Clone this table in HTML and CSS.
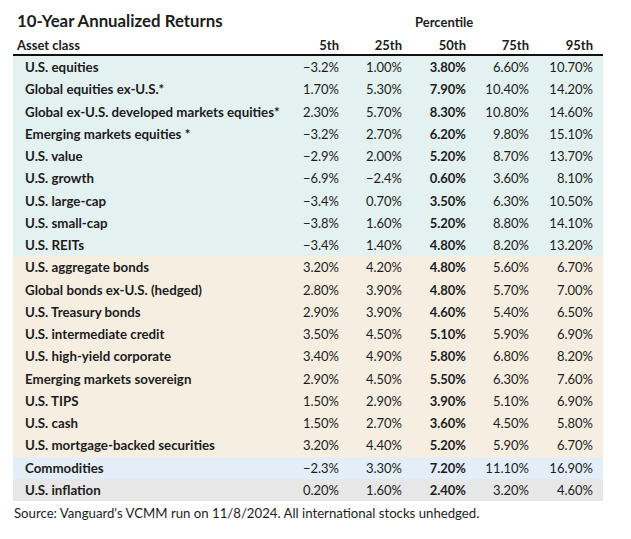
FILE: index.html
```html
<!DOCTYPE html>
<html>
<head>
<meta charset="utf-8">
<link rel="stylesheet" href="styles.css">
</head>
<body>
<div class="wrap">
  <div class="top">
    <h1 class="title">10-Year Annualized Returns</h1>
    <div class="pct">Percentile</div>
  </div>
  <div class="row head">
    <div class="lab">Asset class</div><div>5th</div><div>25th</div><div class="b">50th</div><div>75th</div><div>95th</div>
  </div>
  <div class="body">
    <div class="row eq"><div class="lab">U.S. equities</div><div>−3.2%</div><div>1.00%</div><div class="b">3.80%</div><div>6.60%</div><div>10.70%</div></div>
    <div class="row eq"><div class="lab">Global equities ex-U.S.*</div><div>1.70%</div><div>5.30%</div><div class="b">7.90%</div><div>10.40%</div><div>14.20%</div></div>
    <div class="row eq"><div class="lab">Global ex-U.S. developed markets equities*</div><div>2.30%</div><div>5.70%</div><div class="b">8.30%</div><div>10.80%</div><div>14.60%</div></div>
    <div class="row eq"><div class="lab">Emerging markets equities *</div><div>−3.2%</div><div>2.70%</div><div class="b">6.20%</div><div>9.80%</div><div>15.10%</div></div>
    <div class="row eq"><div class="lab">U.S. value</div><div>−2.9%</div><div>2.00%</div><div class="b">5.20%</div><div>8.70%</div><div>13.70%</div></div>
    <div class="row eq"><div class="lab">U.S. growth</div><div>−6.9%</div><div>−2.4%</div><div class="b">0.60%</div><div>3.60%</div><div>8.10%</div></div>
    <div class="row eq"><div class="lab">U.S. large-cap</div><div>−3.4%</div><div>0.70%</div><div class="b">3.50%</div><div>6.30%</div><div>10.50%</div></div>
    <div class="row eq"><div class="lab">U.S. small-cap</div><div>−3.8%</div><div>1.60%</div><div class="b">5.20%</div><div>8.80%</div><div>14.10%</div></div>
    <div class="row eq"><div class="lab">U.S. REITs</div><div>−3.4%</div><div>1.40%</div><div class="b">4.80%</div><div>8.20%</div><div>13.20%</div></div>
    <div class="row bd"><div class="lab">U.S. aggregate bonds</div><div>3.20%</div><div>4.20%</div><div class="b">4.80%</div><div>5.60%</div><div>6.70%</div></div>
    <div class="row bd"><div class="lab">Global bonds ex-U.S. (hedged)</div><div>2.80%</div><div>3.90%</div><div class="b">4.80%</div><div>5.70%</div><div>7.00%</div></div>
    <div class="row bd"><div class="lab">U.S. Treasury bonds</div><div>2.90%</div><div>3.90%</div><div class="b">4.60%</div><div>5.40%</div><div>6.50%</div></div>
    <div class="row bd"><div class="lab">U.S. intermediate credit</div><div>3.50%</div><div>4.50%</div><div class="b">5.10%</div><div>5.90%</div><div>6.90%</div></div>
    <div class="row bd"><div class="lab">U.S. high-yield corporate</div><div>3.40%</div><div>4.90%</div><div class="b">5.80%</div><div>6.80%</div><div>8.20%</div></div>
    <div class="row bd"><div class="lab">Emerging markets sovereign</div><div>2.90%</div><div>4.50%</div><div class="b">5.50%</div><div>6.30%</div><div>7.60%</div></div>
    <div class="row bd"><div class="lab">U.S. TIPS</div><div>1.50%</div><div>2.90%</div><div class="b">3.90%</div><div>5.10%</div><div>6.90%</div></div>
    <div class="row bd"><div class="lab">U.S. cash</div><div>1.50%</div><div>2.70%</div><div class="b">3.60%</div><div>4.50%</div><div>5.80%</div></div>
    <div class="row bd"><div class="lab">U.S. mortgage-backed securities</div><div>3.20%</div><div>4.40%</div><div class="b">5.20%</div><div>5.90%</div><div>6.70%</div></div>
    <div class="row cm"><div class="lab">Commodities</div><div>−2.3%</div><div>3.30%</div><div class="b">7.20%</div><div>11.10%</div><div>16.90%</div></div>
    <div class="row inf"><div class="lab">U.S. inflation</div><div>0.20%</div><div>1.60%</div><div class="b">2.40%</div><div>3.20%</div><div>4.60%</div></div>
  </div>
  <p class="src">Source: Vanguard's VCMM run on 11/8/2024. All international stocks unhedged.</p>
</div>
</body>
</html>
```
FILE: styles.css
```css
* { box-sizing: border-box; }
html, body { margin: 0; padding: 0; background: #fff; }
body {
  font-family: Lato, "Open Sans", sans-serif;
  color: #1c1c1c;
}
.wrap {
  width: 590px;
  margin-left: 13px;
  padding-top: 10px;
}
.top {
  display: flex;
  align-items: baseline;
  height: 24px;
}
.title {
  margin: 0 0 0 4px;
  font-size: 16.8px;
  font-weight: 700;
  width: 398px;
}
.pct {
  font-size: 13px;
  font-weight: 700;
}
.row {
  display: grid;
  grid-template-columns: 263px 63px 63px 64px 63px 64px;
  padding-right: 10px;
  height: 22.25px;
  align-items: center;
  font-size: 13px;
}
.row > div { text-align: right; white-space: nowrap; }
.row > .lab { text-align: left; padding-left: 12px; font-weight: 700; font-size: 13.3px; }
.row .b { font-weight: 700; }
.head {
  height: 22px;
  font-weight: 700;
  border-bottom: 2.5px solid #111;
  align-items: end;
  padding-bottom: 1px;
}
.head > .lab { padding-left: 4px; font-size: 13px; }
.eq { background: #e3f1f1; }
.bd { background: #f7eee2; }
.cm { background: #e4eef9; }
.inf { background: #e7e7e7; }
.src {
  margin: 4px 0 0 1px;
  font-size: 13.2px;
}
```
